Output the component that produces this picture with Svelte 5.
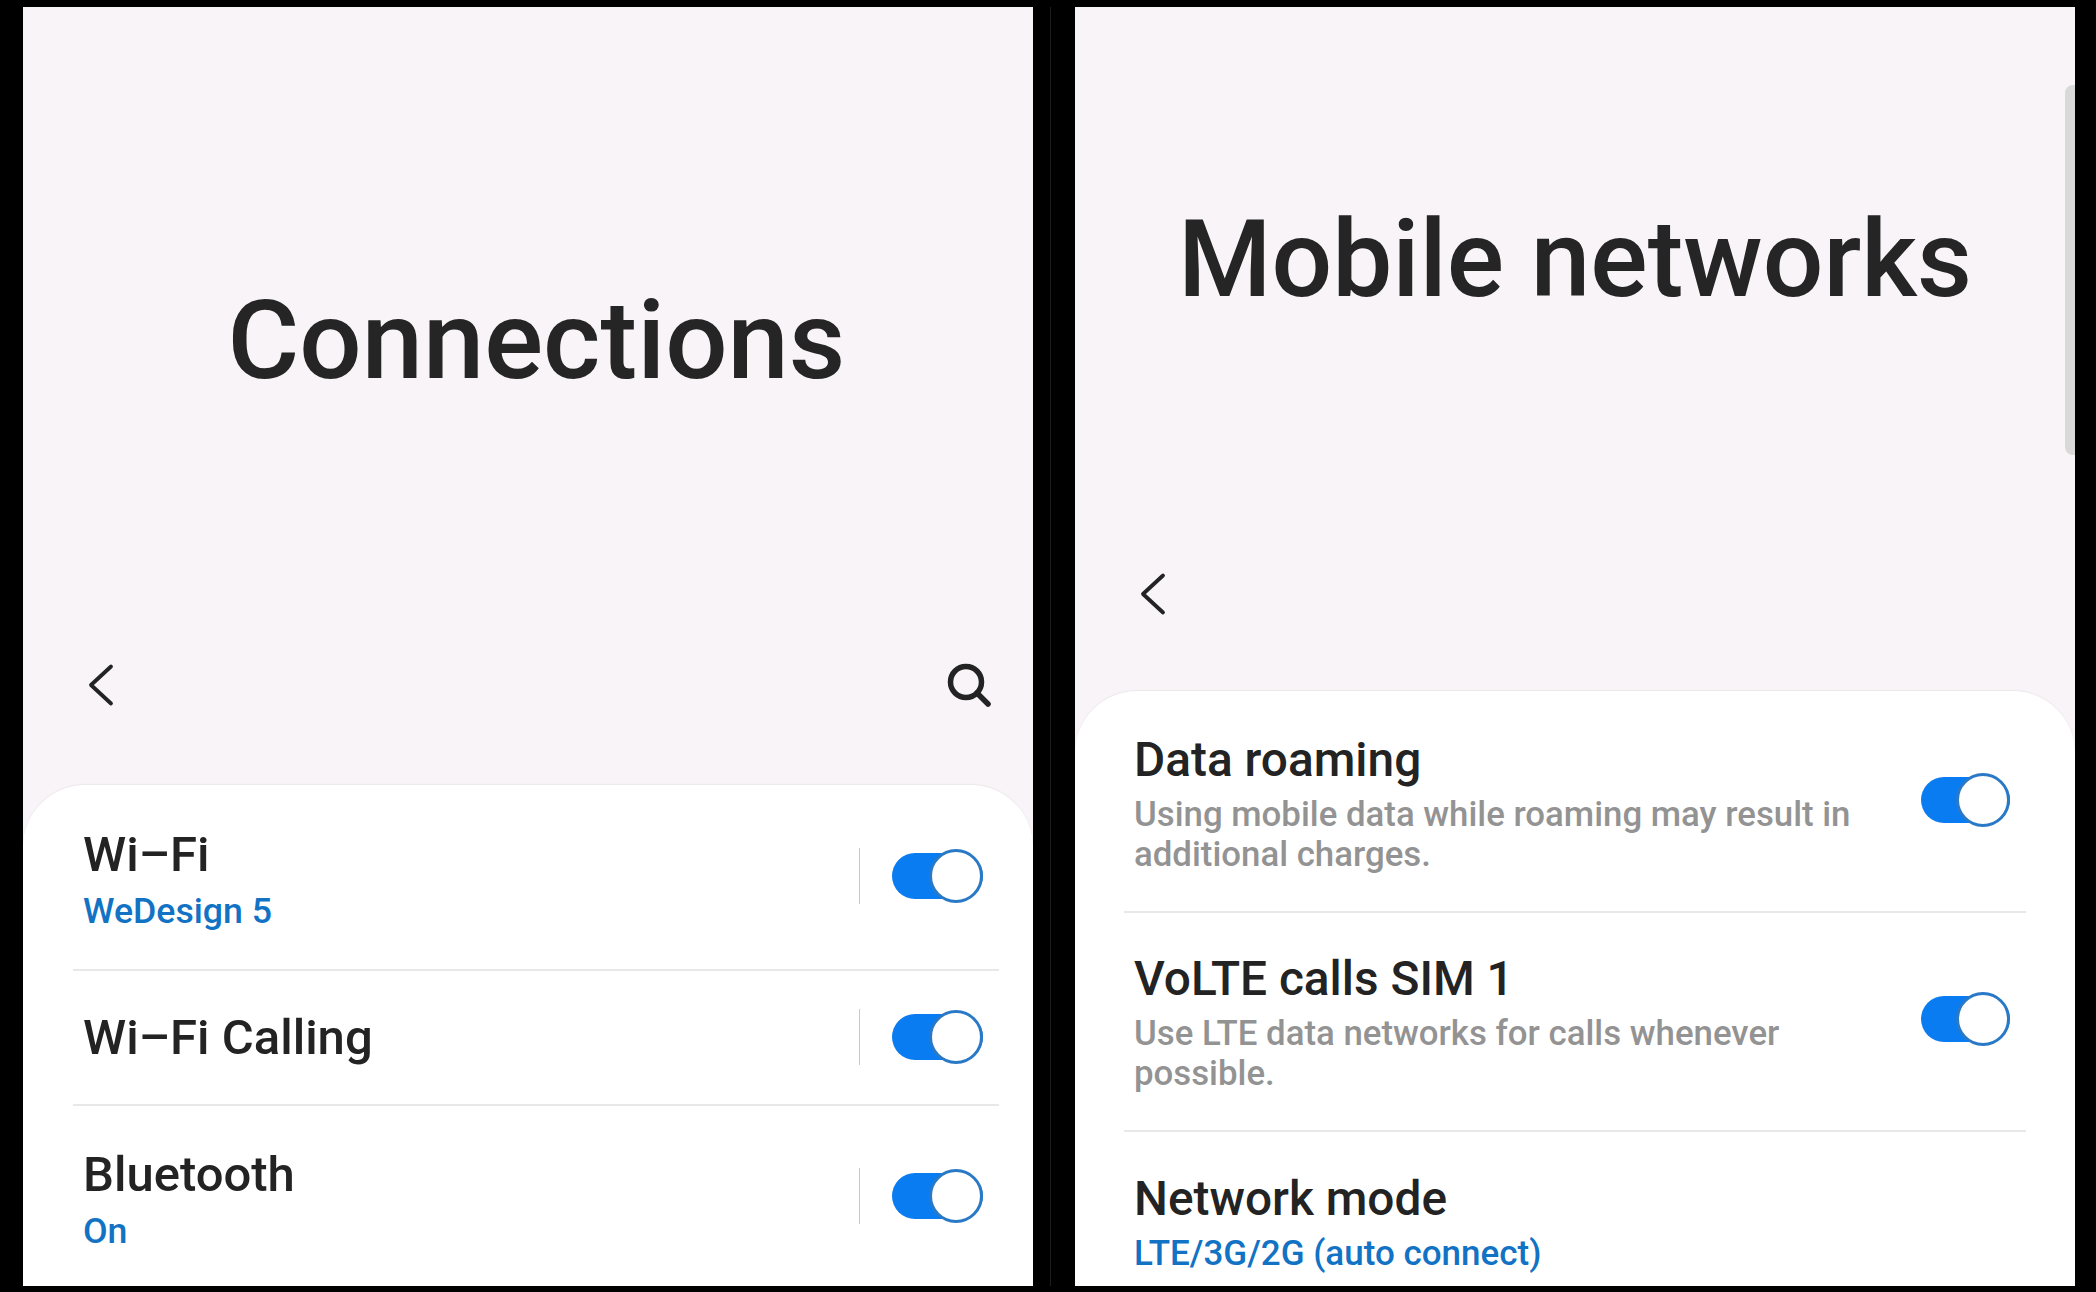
<script lang="ts">
    const wifiRows = [
        { title: "Wi–Fi", sub: "WeDesign 5", height: 184 },
        { title: "Wi–Fi Calling", sub: "", height: 133 },
        { title: "Bluetooth", sub: "On", height: 182 },
    ];

    const mobileRows = [
        { title: "Data roaming", desc: ["Using mobile data while roaming may result in", "additional charges."], toggle: true, height: 217 },
        { title: "VoLTE calls SIM 1", desc: ["Use LTE data networks for calls whenever", "possible."], toggle: true, height: 217 },
        { title: "Network mode", value: "LTE/3G/2G (auto connect)", toggle: false, height: 185 },
    ];
</script>

<div class="screen">
    <section class="panel left">
        <h1 class="big-title">Connections</h1>
        <div class="nav">
            <svg class="back" viewBox="0 0 28 44" fill="none" stroke="#232323" stroke-width="3.8" stroke-linecap="round" stroke-linejoin="round">
                <path d="M24 3.5 L4 22 L24 40.5" />
            </svg>
            <svg class="search" viewBox="0 0 44 44" fill="none" stroke="#232323" stroke-width="5.5" stroke-linecap="round">
                <circle cx="19" cy="19" r="15.5" />
                <path d="M30 30 L41 41" />
            </svg>
        </div>
        <div class="card">
            {#each wifiRows as row, i}
                {#if i > 0}<div class="rule"></div>{/if}
                <div class="row" class:has-sub={row.sub} style={`height:${row.height}px`}>
                    <div class="texts">
                        <div class="title">{row.title}</div>
                        {#if row.sub}<div class="value">{row.sub}</div>{/if}
                    </div>
                    <span class="sep"></span>
                    <span class="toggle"><span class="knob"></span></span>
                </div>
            {/each}
        </div>
    </section>

    <div class="gutter"></div>

    <section class="panel right">
        <div class="scrollbar"></div>
        <h1 class="big-title">Mobile networks</h1>
        <div class="nav">
            <svg class="back" viewBox="0 0 28 44" fill="none" stroke="#232323" stroke-width="3.8" stroke-linecap="round" stroke-linejoin="round">
                <path d="M24 3.5 L4 22 L24 40.5" />
            </svg>
        </div>
        <div class="card">
            {#each mobileRows as row, i}
                {#if i > 0}<div class="rule"></div>{/if}
                <div class="row has-sub" style={`height:${row.height}px`}>
                    <div class="texts">
                        <div class="title">{row.title}</div>
                        {#if row.desc}
                            <div class="desc-block">
                                {#each row.desc as line}
                                    <div class="desc">{line}</div>
                                {/each}
                            </div>
                        {/if}
                        {#if row.value}<div class="value">{row.value}</div>{/if}
                    </div>
                    {#if row.toggle}
                        <span class="toggle"><span class="knob"></span></span>
                    {/if}
                </div>
            {/each}
        </div>
    </section>
</div>

<style>
    :global(body) {
        margin: 0;
        background: #000;
    }

    .screen {
        display: flex;
        height: 1292px;
        padding: 7px 21px 6px 23px;
        box-sizing: border-box;
        font-family: Roboto, "Noto Sans", sans-serif;
        overflow: hidden;
    }

    .gutter {
        width: 1px;
        margin: 0 24px 0 17px;
        background: #1e1e1e;
    }

    .panel {
        position: relative;
        display: flex;
        flex-direction: column;
        background: #f8f4f7;
        overflow: hidden;
        box-sizing: border-box;
    }

    .panel.left {
        width: 1010px;
    }

    .panel.right {
        width: 1000px;
    }

    .big-title {
        flex: none;
        margin: 0;
        text-align: center;
        font-weight: 500;
        color: #252525;
        line-height: 120px;
    }

    .left .big-title {
        font-size: 110px;
        margin-top: 274px;
        padding-left: 17px;
    }

    .right .big-title {
        font-size: 107px;
        margin-top: 193px;
    }

    .nav {
        flex: none;
        display: flex;
        align-items: center;
        justify-content: space-between;
        height: 60px;
    }

    .left .nav {
        margin-top: 254px;
        padding: 0 42px 0 64px;
    }

    .right .nav {
        margin-top: 244px;
        padding: 0 0 0 64px;
    }

    .back {
        width: 28px;
        height: 44px;
    }

    .search {
        width: 44px;
        height: 44px;
    }

    .card {
        flex: 1 0 auto;
        background: #fff;
        border-radius: 62px 62px 0 0;
        box-shadow: 0 -1px 1px #ebe8eb;
    }

    .left .card {
        margin-top: 70px;
        padding: 0 34px 0 50px;
    }

    .right .card {
        margin-top: 67px;
        padding: 0 49px;
    }

    .rule {
        height: 2px;
        background: #e8e8e8;
    }

    .right .rule {
        margin: 3px 0 -3px;
    }

    .row {
        display: flex;
        align-items: center;
        padding: 0 16px 0 10px;
        box-sizing: border-box;
    }

    .texts {
        flex: 1;
    }

    .left .has-sub .texts {
        padding-top: 7px;
    }

    .right .has-sub .texts {
        padding-top: 5px;
    }

    .title {
        line-height: 58px;
        font-weight: 500;
        color: #232323;
    }

    .left .title {
        font-size: 49px;
    }

    .right .title {
        font-size: 47.8px;
    }

    .value {
        line-height: 50px;
        font-weight: 500;
        color: #1272c4;
    }

    .left .value {
        font-size: 35.7px;
        margin-top: 2px;
    }

    .right .value {
        font-size: 35px;
        margin-top: 1px;
    }

    .desc-block {
        margin-top: 5px;
    }

    .desc {
        font-size: 34.8px;
        line-height: 40px;
        font-weight: 500;
        color: #939393;
    }

    .sep {
        width: 1px;
        height: 56px;
        margin: -2px 32px 0 0;
        background: #c9c9c9;
    }

    .toggle {
        position: relative;
        display: block;
        width: 91px;
        height: 46px;
        margin-top: -2px;
        border-radius: 23px;
        background: #0a7cf2;
    }

    .right .toggle {
        width: 89px;
        margin-top: 0;
    }

    .knob {
        position: absolute;
        top: -4px;
        right: 0;
        width: 54px;
        height: 54px;
        box-sizing: border-box;
        border-radius: 50%;
        background: #fff;
        border: 3px solid #2a79c6;
    }

    .scrollbar {
        position: absolute;
        top: 78px;
        right: 0;
        width: 10px;
        height: 370px;
        background: #d9d9d9;
        border-radius: 8px 0 0 8px;
    }
</style>
